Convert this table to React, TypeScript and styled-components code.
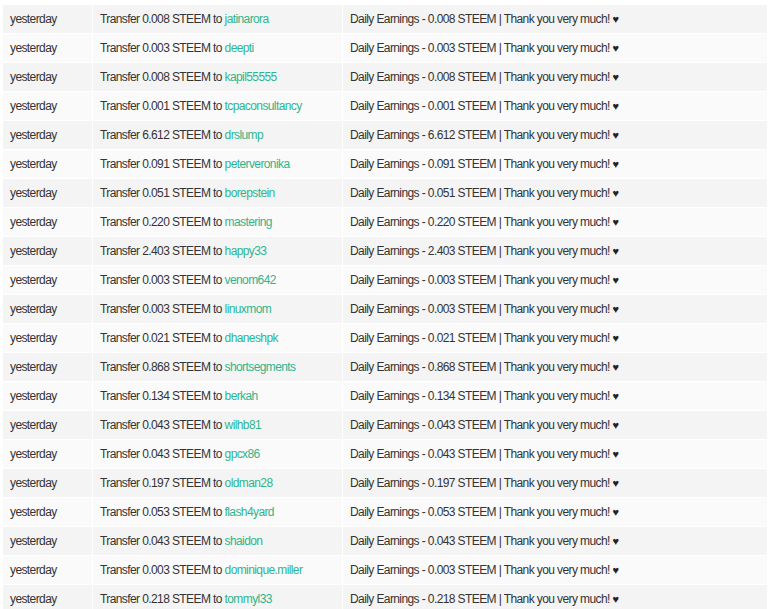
import React from "react";
import styled, { createGlobalStyle } from "styled-components";

const Global = createGlobalStyle`
  html, body { margin: 0; padding: 0; background: #ffffff; }
  body { font-family: "Liberation Sans", Arial, sans-serif; }
`;

const Wrap = styled.div`
  padding: 4px 2px 0 2px;
`;

const Table = styled.table`
  width: 100%;
  table-layout: fixed;
  border-collapse: separate;
  border-spacing: 1px 1px;
  font-size: 12px;
  letter-spacing: -0.6px;
  color: #333333;
`;

const Row = styled.tr<{ $odd: boolean }>`
  background: ${(p) => (p.$odd ? "#f4f4f4" : "#fafafa")};
`;

const Cell = styled.td`
  height: 28px;
  padding: 0 7px;
  white-space: nowrap;
  overflow: hidden;
  vertical-align: middle;
`;

const Account = styled.a`
  color: #2fb48e;
  text-decoration: none;
`;

const Heart = styled.span`
  font-size: 11px;
  color: #222222;
`;

const rows: [string, string][] = [
  ["jatinarora", "0.008"],
  ["deepti", "0.003"],
  ["kapil55555", "0.008"],
  ["tcpaconsultancy", "0.001"],
  ["drslump", "6.612"],
  ["peterveronika", "0.091"],
  ["borepstein", "0.051"],
  ["mastering", "0.220"],
  ["happy33", "2.403"],
  ["venom642", "0.003"],
  ["linuxmom", "0.003"],
  ["dhaneshpk", "0.021"],
  ["shortsegments", "0.868"],
  ["berkah", "0.134"],
  ["wilhb81", "0.043"],
  ["gpcx86", "0.043"],
  ["oldman28", "0.197"],
  ["flash4yard", "0.053"],
  ["shaidon", "0.043"],
  ["dominique.miller", "0.003"],
  ["tommyl33", "0.218"],
];

export default function App() {
  return (
    <>
      <Global />
      <Wrap>
        <Table>
          <colgroup>
            <col style={{ width: 89 }} />
            <col style={{ width: 249 }} />
            <col />
          </colgroup>
          <tbody>
            {rows.map(([name, amt], i) => (
              <Row key={name} $odd={i % 2 === 0}>
                <Cell>yesterday</Cell>
                <Cell>
                  Transfer {amt} STEEM to <Account href="#">{name}</Account>
                </Cell>
                <Cell>
                  Daily Earnings - {amt} STEEM | Thank you very much! <Heart>♥</Heart>
                </Cell>
              </Row>
            ))}
          </tbody>
        </Table>
      </Wrap>
    </>
  );
}
